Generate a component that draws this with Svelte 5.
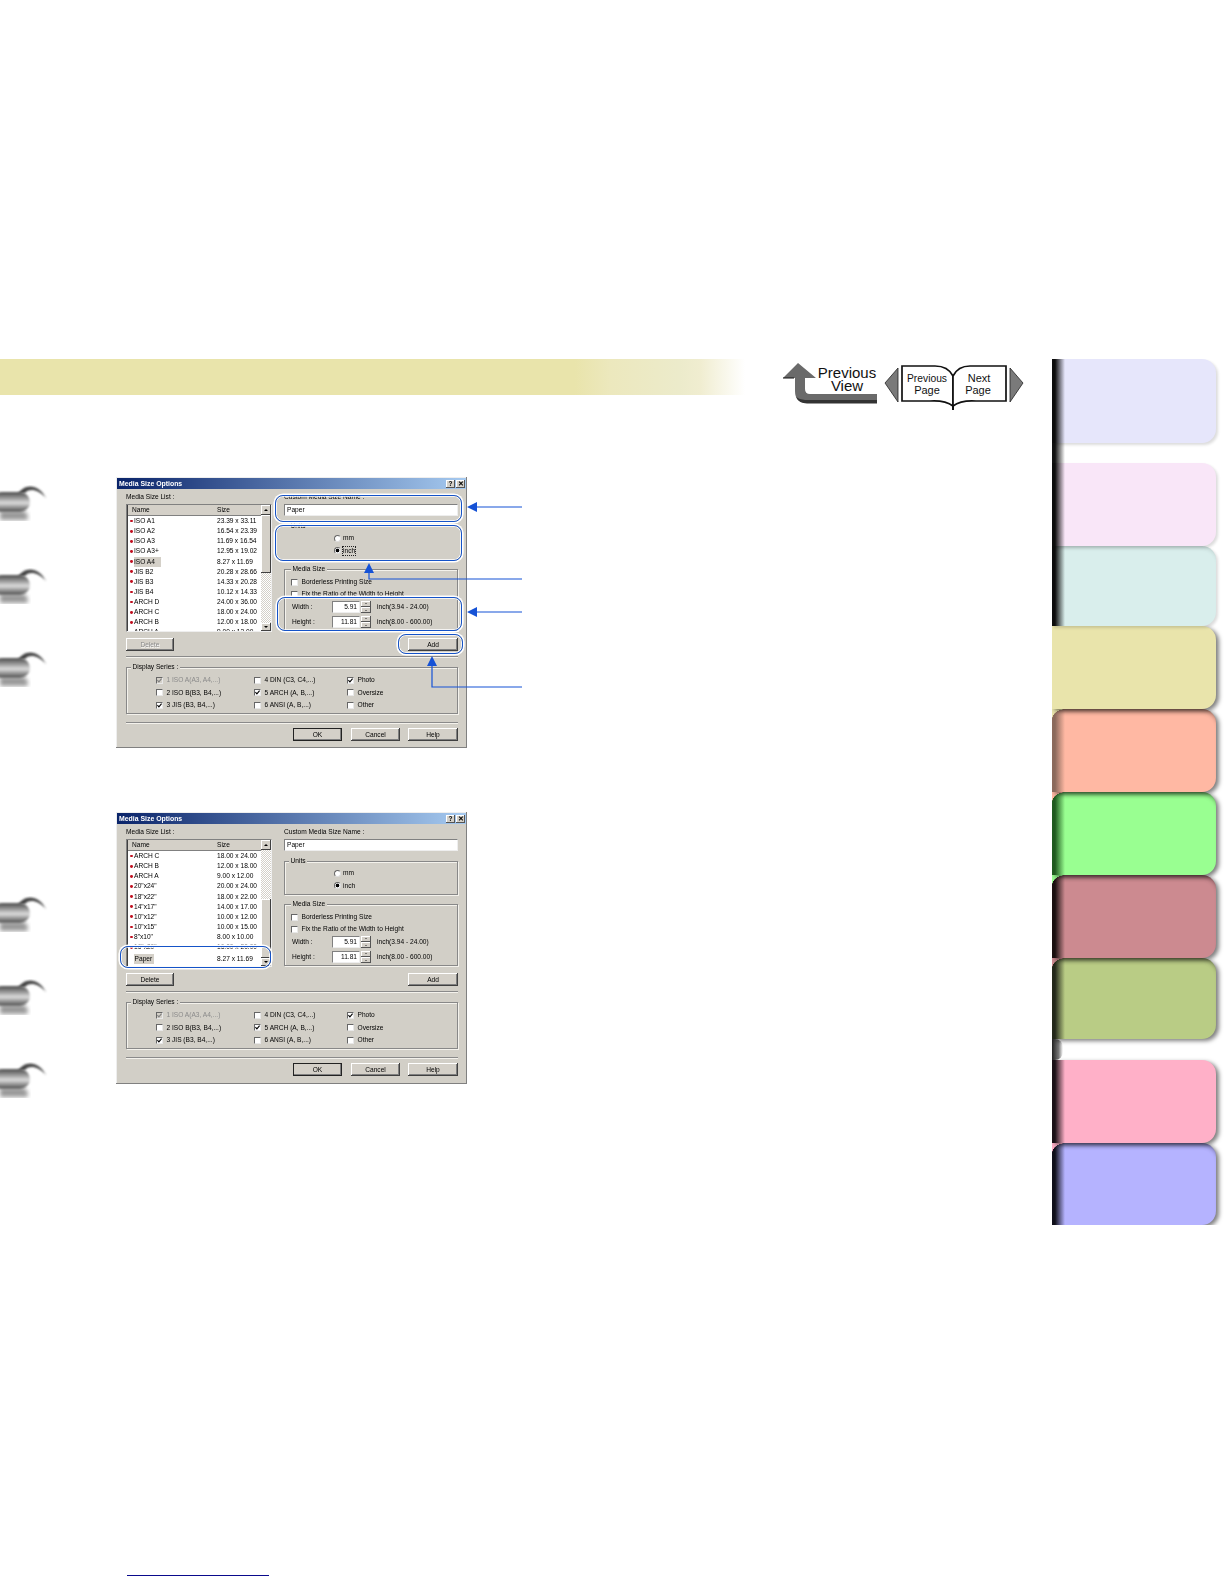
<script>
  const list1 = [
    ['ISO A1','23.39 x 33.11'],['ISO A2','16.54 x 23.39'],['ISO A3','11.69 x 16.54'],['ISO A3+','12.95 x 19.02'],
    ['ISO A4','8.27 x 11.69',1],['JIS B2','20.28 x 28.66'],['JIS B3','14.33 x 20.28'],['JIS B4','10.12 x 14.33'],
    ['ARCH D','24.00 x 36.00'],['ARCH C','18.00 x 24.00'],['ARCH B','12.00 x 18.00'],['ARCH A','9.00 x 12.00']
  ];
  const list2 = [
    ['ARCH C','18.00 x 24.00'],['ARCH B','12.00 x 18.00'],['ARCH A','9.00 x 12.00'],['20"x24"','20.00 x 24.00'],
    ['18"x22"','18.00 x 22.00'],['14"x17"','14.00 x 17.00'],['10"x12"','10.00 x 12.00'],['10"x15"','10.00 x 15.00'],
    ['8"x10"','8.00 x 10.00'],['16"x20"','16.00 x 20.00'],['Paper','8.27 x 11.69',2]
  ];
  const series = [
    ['1 ISO A(A3, A4,...)',1,1],['4 DIN (C3, C4,...)',0,0],['Photo',1,0],
    ['2 ISO B(B3, B4,...)',0,0],['5 ARCH (A, B,...)',1,0],['Oversize',0,0],
    ['3 JIS (B3, B4,...)',1,0],['6 ANSI (A, B,...)',0,0],['Other',0,0]
  ];
  const tabs = ['t1','t2','t3','t4','t5','t6','t7','t8','t9','t10'];
  const rings1 = [0,1,2];
  const rings2 = [0,1,2];
</script>

{#snippet ring()}
  <svg class="binder" width="60" height="40" viewBox="0 0 60 40">
    <defs>
      <linearGradient id="tube" x1="0" y1="0" x2="0" y2="1">
        <stop offset="0" stop-color="#4a4a4a"/><stop offset=".25" stop-color="#8a8a8a"/>
        <stop offset=".55" stop-color="#dcdcdc"/><stop offset=".85" stop-color="#777"/><stop offset="1" stop-color="#555"/>
      </linearGradient>
      <filter id="soft"><feGaussianBlur stdDeviation=".8"/></filter>
      <filter id="softer"><feGaussianBlur stdDeviation="2"/></filter>
    </defs>
    <path d="M0 28 H24 Q30 32 27 37 H0 Z" fill="#999" filter="url(#softer)"/>
    <path d="M18 11 C24 1 38 0 46 15 C38 6 29 5 25 10 Z" fill="#444" filter="url(#soft)"/>
    <rect x="-8" y="9" width="38" height="20" rx="10" fill="url(#tube)" filter="url(#soft)"/>
  </svg>
{/snippet}

{#snippet check(on, dis)}
  <span class="chk" class:dis>
    {#if on}<svg width="5" height="5" viewBox="0 0 5 5"><path d="M.4 2.2 L1.9 3.8 L4.6 .6" fill="none" stroke={dis ? '#808080' : '#000'} stroke-width="1.1"/></svg>{/if}
  </span>
{/snippet}

{#snippet dialog(rows, second)}
  <div class="dlg">
    <div class="title">
      <span>Media Size Options</span>
      <span class="tbtns"><b>?</b><b>✕</b></span>
    </div>
    <div class="body">
      <div class="top">
        <div class="left">
          <div class="cap">Media Size List :</div>
          <div class="list">
            <div class="rows">
              <div class="row head"><span class="nm">Name</span><span class="sz">Size</span></div>
              {#each rows as r}
                <div class="row" class:last={r[2] === 2}>
                  <span class="nm">{#if r[2] !== 2}<i class="dot"></i>{/if}<span class:sel={r[2]}>{r[0]}</span></span>
                  <span class="sz">{r[1]}</span>
                </div>
              {/each}
            </div>
            <div class="scroll" class:low={second}>
              <span class="sb up"></span>
              {#if second}<span class="track fix"></span>{/if}
              <span class="thumb"></span>
              {#if !second}<span class="track"></span>{/if}
              <span class="sb down"></span>
            </div>
          </div>
        </div>
        <div class="right">
          <div class="cap">Custom Media Size Name :</div>
          <div class="field name">Paper</div>
          <div class="group units" class:plain={!second}>
            <span class="legend">Units</span>
            <div class="radio"><i class="rad"></i><span>mm</span></div>
            <div class="radio"><i class="rad on"></i><span class:focus={!second}>inch</span></div>
          </div>
          <div class="group media">
            <span class="legend">Media Size</span>
            <div class="opt first">{@render check(0, 0)}<span>Borderless Printing Size</span></div>
            <div class="opt">{@render check(0, 0)}<span>Fix the Ratio of the Width to Height</span></div>
            <div class="dim w">
              <span class="dl">Width :</span><span class="field num">5.91</span>
              <span class="spin"><i class="sp u"></i><i class="sp d"></i></span>
              <span class="rng">inch(3.94 - 24.00)</span>
            </div>
            <div class="dim h">
              <span class="dl">Height :</span><span class="field num">11.81</span>
              <span class="spin"><i class="sp u"></i><i class="sp d"></i></span>
              <span class="rng">inch(8.00 - 600.00)</span>
            </div>
          </div>
        </div>
      </div>
      <div class="actions">
        <button class="btn del" class:off={!second}>Delete</button>
        <button class="btn add">Add</button>
      </div>
      <div class="sep s1"></div>
      <div class="group series">
        <span class="legend">Display Series :</span>
        <div class="sgrid">
          {#each series as s}
            <div class="opt" class:gray={s[2]}>{@render check(s[1], s[2])}<span>{s[0]}</span></div>
          {/each}
        </div>
      </div>
      <div class="sep s2"></div>
      <div class="foot">
        <button class="btn def">OK</button>
        <button class="btn">Cancel</button>
        <button class="btn wide">Help</button>
      </div>
    </div>
  </div>
{/snippet}

<div class="page">
  <div class="main">
    <header class="header">
      <div class="band"></div>
      <svg class="nav" width="246" height="52" viewBox="0 0 246 52">
        <path d="M18 3 L36 18 H25 V29 Q25 34 30 34 H97 V43 H27 Q15 43 15 31 V18 H3 Z" fill="#6a6a6a"/>
        <path d="M25 40 H97 V43.5 H27 Q19 43.5 16 37 Q20 40 25 40 Z" fill="#333"/>
        <path d="M3 18 H14" stroke="#111" stroke-width="1"/>
        <text class="big" x="67" y="18">Previous</text>
        <text class="big" x="67" y="31">View</text>
        <path d="M105 23 L118 8 V42 Z" fill="#7a7a7a" stroke="#222" stroke-width=".8"/>
        <path d="M122 6 H155 Q168 6 173 16 V46 Q165 40 150 41 H122 Z" fill="#fff" stroke="#111" stroke-width="1.7"/>
        <path d="M173 16 Q178 6 190 6 H226 V41 H196 Q181 40 173 46 Z" fill="#fff" stroke="#111" stroke-width="1.7"/>
        <path d="M173 46 V50" stroke="#111" stroke-width="2"/>
        <text class="small" x="147" y="22" textLength="40" lengthAdjust="spacingAndGlyphs">Previous</text>
        <text class="small" x="147" y="34">Page</text>
        <text class="small" x="199" y="22">Next</text>
        <text class="small" x="198" y="34">Page</text>
        <path d="M230 8 L243 23 L230 42 Z" fill="#7a7a7a" stroke="#222" stroke-width=".8"/>
      </svg>
    </header>
    <div class="content">
      <div class="rail">
        <div class="railset">{#each rings1 as _}{@render ring()}{/each}</div>
        <div class="railset two">{#each rings2 as _}{@render ring()}{/each}</div>
      </div>
      <div class="shots">
        <div class="shot">
          {@render dialog(list1, false)}
          <span class="mark r1"></span>
          <span class="mark r2"></span>
          <span class="mark r3"></span>
          <span class="mark r4"></span>
          <svg class="callouts" width="420" height="271" viewBox="0 0 420 271">
            <path d="M406 30 H358 M406 135 H358 M406 102 H253 V92 M406 210 H316 V186" fill="none" stroke="#1552d6" stroke-width="1.2"/>
            <path d="M351 30 L361 25 V35 Z M351 135 L361 130 V140 Z M253 86 L258 96 H248 Z M316 179 L321 189 H311 Z" fill="#1552d6"/>
          </svg>
        </div>
        <div class="shot second">
          {@render dialog(list2, true)}
          <span class="mark r5"></span>
        </div>
        <div class="rule"></div>
      </div>
    </div>
  </div>
  <aside class="tabs">
    {#each tabs as t}
      <div class="tab {t}"></div>
      {#if t === 't1'}<div class="gap"></div>{/if}
      {#if t === 't8'}<div class="gap curl"></div>{/if}
    {/each}
  </aside>
</div>

<style>
  :global(body) { margin: 0; background: #fff; }
  .page {
    width: 1224px; height: 1584px; padding-top: 359px; box-sizing: border-box; overflow: hidden;
    display: grid; grid-template-columns: 1052px 172px; align-items: start;
    font-family: "Liberation Sans", Arial, sans-serif; color: #111;
  }
  .main { min-width: 0; }

  .header { display: flex; height: 36px; }
  .band {
    width: 752px; height: 36px;
    background: linear-gradient(90deg, #e9e4ab 0, #e9e4ab 575px, #ece8bd 610px, #ecebcb 680px, #f0edd0 700px, #fff 745px);
  }
  .nav { margin: 1px 0 0 28px; flex: none; overflow: visible; }
  .big { font-size: 15px; text-anchor: middle; fill: #111; }
  .small { font-size: 11px; text-anchor: middle; fill: #111; }

  .content { display: flex; margin-top: 82px; }
  .rail { width: 116px; flex: none; padding-top: 6px; }
  .railset { display: flex; flex-direction: column; gap: 43px; }
  .railset.two { margin-top: 205px; }
  .binder { display: block; overflow: hidden; }

  .shots { flex: none; width: 420px; }
  .shot { position: relative; width: 351px; height: 271px; }
  .shot.second { margin-top: 64px; height: 272px; }
  .rule { width: 142px; height: 1.3px; background: #0a0a8c; margin: 491px 0 0 11px; }

  .dlg {
    width: 351px; height: 100%; box-sizing: border-box; padding: 1px 1px 0;
    background: #d2cfc7; box-shadow: inset -1px -1px 0 #808080, inset 1px 1px 0 #eee;
    font-size: 6.6px; line-height: 8px; color: #000; filter: blur(.32px);
    overflow: hidden; white-space: nowrap;
  }
  .title {
    height: 11px; padding: 0 2px; display: flex; align-items: center; justify-content: space-between;
    background: linear-gradient(90deg, #0a246a, #a6caf0); color: #fff; font-weight: bold; font-size: 6.9px;
  }
  .tbtns { display: flex; gap: 1px; margin-right: -1px; }
  .tbtns b {
    width: 9px; height: 8px; background: #d4d0c8; color: #000; font-size: 6.5px; line-height: 8px; text-align: center;
    box-shadow: inset -1px -1px 0 #555, inset 1px 1px 0 #fff;
  }
  .body { padding: 4px 8px 0 9px; }
  .top { display: flex; gap: 12px; }
  .left { width: 146px; flex: none; }
  .right { width: 174px; flex: none; }
  .cap { height: 8px; margin-bottom: 3px; padding-left: 0; }

  .list {
    height: 128px; box-sizing: border-box; display: flex; background: #fff; overflow: hidden;
    border: 1px solid; border-color: #808080 #eee #eee #808080; box-shadow: inset 1px 1px 0 #404040;
  }
  .rows { flex: 1; min-width: 0; padding-left: 1px; overflow: hidden; }
  .row { display: flex; height: 10.13px; align-items: center; }
  .row.head { height: 10px; background: #d4d0c8; padding-bottom: 1px; margin-bottom: 0; box-shadow: inset 0 -1px 0 #808080; }
  .row.last { margin-top: 1.6px; }
  .nm { width: 89px; flex: none; padding-left: 2px; box-sizing: border-box; display: flex; align-items: center; }
  .head .nm { padding-left: 4px; }
  .sz { flex: none; }
  .dot { width: 2.8px; height: 2.8px; border-radius: 50%; background: #c01020; margin-right: 1.2px; flex: none; }
  .last .nm span { margin-left: 3.6px; padding: 1px 2px 1px 1px; }
  .sel { background: #d4d0c8; padding: 1px 6px 1px 0; }
  .scroll { width: 10px; flex: none; display: flex; flex-direction: column; background: #d4d0c8; }
  .sb {
    height: 10px; flex: none; background: #d4d0c8; box-shadow: inset -1px -1px 0 #404040, inset 1px 1px 0 #fff;
    display: flex; align-items: center; justify-content: center;
  }
  .sb::after { content: ""; border: 2.5px solid transparent; }
  .up::after { border-bottom-color: #000; margin-top: -2px; }
  .down { height: 8px; }
  .down::after { border-top-color: #000; margin-top: 2px; }
  .track { flex: 1; background: repeating-conic-gradient(#fff 0 25%, #d4d0c8 0 50%) 0 0 / 2px 2px; }
  .track.fix { flex: none; height: 49px; }
  .thumb { height: 58px; flex: none; background: #d4d0c8; box-shadow: inset -1px -1px 0 #404040, inset 1px 1px 0 #fff; }
  .low .thumb { flex: 1; height: auto; }

  .field {
    background: #fff; box-sizing: border-box; border: 1px solid; border-color: #808080 #eee #eee #808080;
    height: 12px; line-height: 10px; padding: 0 2px;
  }
  .group {
    border: 1px solid #888; box-shadow: 1px 1px 0 #f4f2ec, inset 1px 1px 0 #f4f2ec; box-sizing: border-box;
  }
  .group.plain { border-color: transparent; box-shadow: none; }
  .legend {
    display: block; width: fit-content; height: 8px; background: #d2cfc7; margin: -5px 0 0 4px; padding: 0 1.5px;
  }
  .units { height: 34px; margin-top: 10px; padding: 0 0 0 49px; }
  .units .legend { margin-left: -45px; }
  .radio { display: flex; align-items: center; height: 12.6px; gap: 2px; }
  .radio:first-of-type { margin-top: 2px; }
  .rad {
    width: 7px; height: 7px; box-sizing: border-box; border-radius: 50%; background: #fff; border: 1px solid #666;
    border-right-color: #ddd; border-bottom-color: #ddd; flex: none;
  }
  .rad.on { background: radial-gradient(circle, #000 0 1.5px, #fff 2.2px); }
  .focus { outline: 1px dotted #222; outline-offset: .5px; }
  .media { height: 62px; margin-top: 9px; padding-left: 6px; }
  .media .legend { margin-left: 0; }
  .opt { display: flex; align-items: center; height: 12px; gap: 3.5px; }
  .opt.first { margin-top: 3px; }
  .chk {
    width: 7px; height: 7px; box-sizing: border-box; flex: none; background: #fff; display: flex; align-items: center; justify-content: center;
    border: 1px solid; border-color: #666 #e8e8e8 #e8e8e8 #666;
  }
  .chk.dis { background: #d4d0c8; }
  .gray { color: #8a8a8a; }
  .dim { display: flex; align-items: center; height: 12px; }
  .dim.w { margin-top: 1px; }
  .dim.h { margin-top: 3px; }
  .dl { width: 41px; flex: none; padding-left: 1px; box-sizing: border-box; }
  .num { width: 28px; flex: none; text-align: right; }
  .spin { width: 10px; height: 12px; margin-left: 1px; display: flex; flex-direction: column; flex: none; }
  .sp {
    flex: 1; background: #d4d0c8; box-shadow: inset -1px -1px 0 #555, inset 1px 1px 0 #fff;
    display: flex; align-items: center; justify-content: center;
  }
  .sp::after { content: ""; border: 1.6px solid transparent; }
  .sp.u::after { border-bottom-color: #222; margin-top: -2px; }
  .sp.d::after { border-top-color: #222; margin-top: 2px; }
  .rng { margin-left: 6px; }

  .actions { display: flex; justify-content: space-between; margin-top: 6px; }
  .btn {
    width: 49px; height: 13px; padding: 0; border: 0; background: #d4d0c8; color: #000; font: inherit; line-height: 12px;
    box-shadow: inset -1px -1px 0 #404040, inset 1px 1px 0 #fff, inset -2px -2px 0 #808080;
  }
  .del { width: 48px; }
  .add, .wide { width: 50px; }
  .off { color: #8a8a8a; text-shadow: .6px .6px 0 #fff; }
  .def { outline: 1px solid #222; outline-offset: -1px; }
  .sep { height: 2px; background: linear-gradient(#8a8a8a 50%, #f4f2ec 50%); }
  .s1 { margin-top: 5px; }
  .s2 { margin-top: 8px; }
  .series { height: 47px; margin-top: 9px; }
  .sgrid {
    display: grid; grid-template-columns: 98px 93px 1fr; grid-auto-rows: 12.5px; margin: 3px 0 0 29px;
  }
  .sgrid .opt { height: 12.5px; }
  .foot { display: flex; justify-content: flex-end; gap: 9px; margin-top: 4px; }
  .foot .wide { margin-left: -1px; }

  .mark {
    position: absolute; box-sizing: border-box; border: 1.5px solid #1553c8; border-radius: 8px;
    box-shadow: 0 0 0 1.6px #fff, inset 0 0 0 .8px #fff;
  }
  .r1 { left: 159px; top: 18px; width: 187px; height: 27px; }
  .r2 { left: 159px; top: 48px; width: 187px; height: 36px; }
  .r3 { left: 161px; top: 120px; width: 185px; height: 34px; }
  .r4 { left: 282px; top: 157px; width: 65px; height: 20px; }
  .r5 { left: 4px; top: 134px; width: 151px; height: 22px; }
  .callouts { position: absolute; left: 0; top: 0; overflow: visible; }

  .tabs {
    height: 866px; overflow: hidden; display: flex; flex-direction: column; align-items: flex-start;
  }
  .tab {
    width: 164px; position: relative; flex: none; box-sizing: border-box; background: var(--c);
    border-radius: 0 14px 14px 0;
    box-shadow: 3px 2px 4px rgba(0, 0, 0, .5), inset 0 6px 5px -4px rgba(0, 0, 0, var(--top, .45));
  }
  .tab::before {
    content: ""; position: absolute; left: 0; top: 0; bottom: 0; width: 13px;
    background: linear-gradient(90deg, var(--s) 0, var(--s) 3px, transparent 100%);
  }
  .tab::after {
    content: ""; position: absolute; left: 0; top: 0; width: 14px; height: 10px;
    background: radial-gradient(14px 10px at 100% 100%, transparent 97%, var(--p, transparent) 100%);
  }
  .t1, .t2, .t3 { box-shadow: 2px 2px 3px rgba(0, 0, 0, .14); }
  .t1 { height: 84px; --c: #e6e6fb; --s: #0c0c0c; z-index: 9; }
  .t2 { height: 83px; --c: #f9e6f8; --s: #0c0c0c; z-index: 8; }
  .t3 { height: 80px; --c: #d9eeec; --s: #0c0c0c; z-index: 7; box-shadow: 2px 2px 3px rgba(0, 0, 0, .14), inset 0 5px 4px -3px rgba(0, 0, 0, .12); }
  .t4 { height: 83px; --c: #e9e4ab; --s: #e9e4ab; --top: 0; z-index: 6; }
  .t5 { height: 83px; --c: #ffb8a3; --s: #8b6a5c; --p: #e9e4ab; z-index: 5; }
  .t6 { height: 83px; --c: #99ff91; --s: #1f5a1f; --p: #ffb8a3; z-index: 4; }
  .t7 { height: 83px; --c: #cc8a90; --s: #1a1010; --p: #99ff91; z-index: 3; }
  .t8 { height: 81px; --c: #b9cc85; --s: #23281a; --p: #cc8a90; z-index: 2; }
  .t9 { height: 83px; --c: #ffb0c8; --s: #1a1016; --top: 0; z-index: 1; }
  .t10 { height: 82px; --c: #b5b3ff; --s: #0f0f1a; --p: #ffb0c8; z-index: 0; }
  .gap {
    width: 13px; height: 20px; flex: none; background: linear-gradient(90deg, #111 0, #111 3px, transparent 100%);
  }
  .gap.curl {
    height: 21px; width: 11px; border-radius: 0 8px 8px 0; background: linear-gradient(90deg, #222, #777 60%, transparent);
  }
</style>
